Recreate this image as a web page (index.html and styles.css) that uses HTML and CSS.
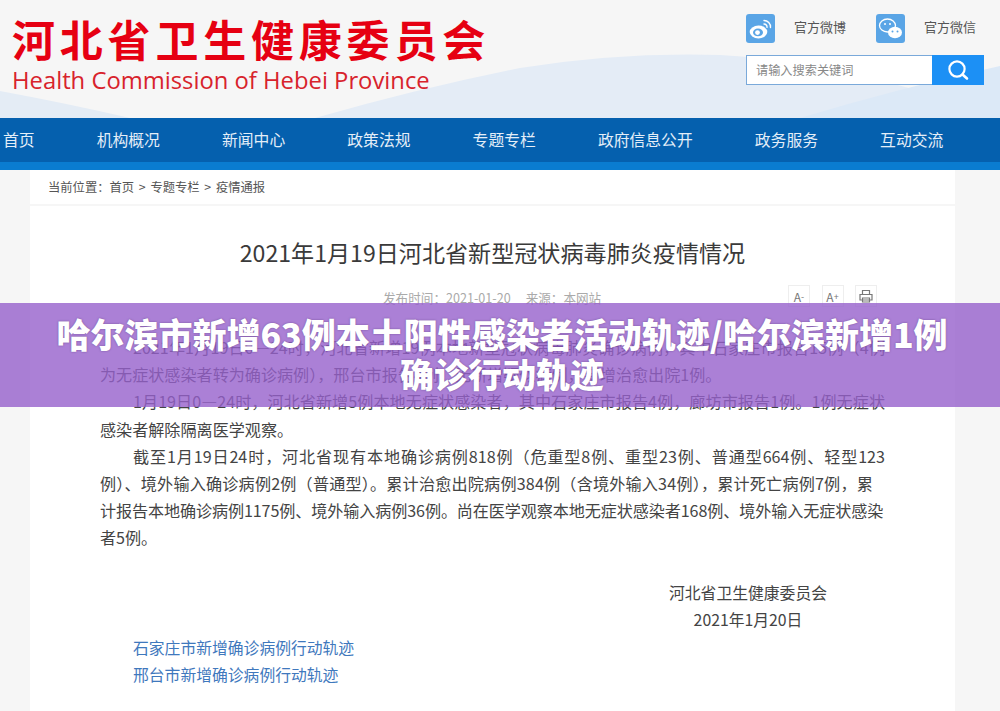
FILE: index.html
```html
<!DOCTYPE html>
<html lang="zh-CN">
<head>
  <meta charset="UTF-8" />
  <title>哈尔滨市新增63例本土阳性感染者活动轨迹</title>
  <link rel="stylesheet" href="styles.css">
</head>
<body>
  <!-- Header -->
  <header class="top">
    <svg class="top-bg" viewBox="0 0 1000 118" preserveAspectRatio="none" aria-hidden="true">
      <path d="M0 91 Q70 104 130 118 L0 118 Z" fill="#e4ecf5"/>
      <path d="M315 118 Q420 88 520 68 Q620 52 720 55 Q850 62 1000 118 Z" fill="#e4ecf6"/>
      <path d="M800 118 Q900 88 1000 66 L1000 118 Z" fill="#dce9f7"/>
    </svg>
    <div class="brand">
      <div class="brand-cn">河北省卫生健康委员会</div>
      <div class="brand-en">Health Commission of Hebei Province</div>
    </div>
    <div class="tools">
      <div class="social">
        <a class="social-item">
          <span class="social-icon">
            <svg viewBox="0 0 29 29" width="29" height="29">
              <ellipse cx="12.5" cy="18" rx="8.8" ry="6.4" fill="#fff"/>
              <ellipse cx="12" cy="18.4" rx="5" ry="3.9" fill="#5aa5e6"/>
              <circle cx="11.5" cy="18.6" r="2.4" fill="#fff"/>
              <path d="M18 6.5a6.5 6.5 0 0 1 6.5 7M18 10a3 3 0 0 1 3 3.4" fill="none" stroke="#fff" stroke-width="1.4" stroke-linecap="round"/>
            </svg>
          </span>
          <span class="social-label">官方微博</span>
        </a>
        <a class="social-item">
          <span class="social-icon">
            <svg viewBox="0 0 29 29" width="29" height="29">
              <ellipse cx="11.5" cy="11.5" rx="8" ry="6.5" fill="none" stroke="#fff" stroke-width="1.3"/>
              <circle cx="9" cy="10" r="1" fill="#fff"/>
              <circle cx="14" cy="10" r="1" fill="#fff"/>
              <ellipse cx="19" cy="18.5" rx="7" ry="5.8" fill="#fff"/>
              <circle cx="16.5" cy="17.5" r="1" fill="#5aa5e6"/>
              <circle cx="21.5" cy="17.5" r="1" fill="#5aa5e6"/>
            </svg>
          </span>
          <span class="social-label">官方微信</span>
        </a>
      </div>
      <div class="search">
        <span class="search-input">请输入搜索关键词</span>
        <span class="search-btn">
          <svg viewBox="0 0 24 24" width="24" height="24">
            <circle cx="11" cy="11" r="7.6" fill="none" stroke="#fff" stroke-width="2.2"/>
            <path d="M16.5 16.5l4.5 4" stroke="#fff" stroke-width="2.6" stroke-linecap="round"/>
          </svg>
        </span>
      </div>
    </div>
  </header>

  <!-- Nav -->
  <nav class="nav">
    <a>首页</a>
    <a>机构概况</a>
    <a>新闻中心</a>
    <a>政策法规</a>
    <a>专题专栏</a>
    <a>政府信息公开</a>
    <a>政务服务</a>
    <a>互动交流</a>
  </nav>

  <!-- Article -->
  <main class="card">
    <div class="crumbs">当前位置：首页 &gt; 专题专栏 &gt; 疫情通报</div>
    <article class="article">
      <h1 class="article-title">2021年1月19日河北省新型冠状病毒肺炎疫情情况</h1>
      <div class="meta">
        <div class="meta-info">
          <span>发布时间：2021-01-20</span>
          <span>来源：本网站</span>
        </div>
        <div class="meta-tools">
          <span class="tool-btn">A<sup>-</sup></span>
          <span class="tool-btn">A<sup>+</sup></span>
          <span class="tool-btn">
            <svg viewBox="0 0 16 16" width="16" height="16">
              <path d="M4.5 6V2.5h7V6M2 6.5h12v5.5H2zM4.5 10h7v4h-7z" fill="none" stroke="#777" stroke-width="1.2"/>
            </svg>
          </span>
        </div>
      </div>
      <div class="body">
        <p>2021年1月19日0—24时，河北省新增19例本地新型冠状病毒肺炎确诊病例，其中石家庄市报告15例（4例为无症状感染者转为确诊病例），邢台市报告4例。无新增疑似病例，新增治愈出院1例。</p>
        <p>1月19日0—24时，河北省新增5例本地无症状感染者，其中石家庄市报告4例，廊坊市报告1例。1例无症状感染者解除隔离医学观察。</p>
        <p>截至1月19日24时，河北省现有本地确诊病例818例（危重型8例、重型23例、普通型664例、轻型123<span class="wide">例）、境外输入确诊病例2例（普通型）。累计治愈出院病例384例（含境外输入34例），累计死亡病例7例，累</span><br><span class="tight">计报告本地确诊病例1175例、境外输入病例36例。尚在医学观察本地无症状感染者168例、境外输入无症状感染</span><br>者5例。</p>
      </div>
      <div class="sign">
        <div>河北省卫生健康委员会</div>
        <div>2021年1月20日</div>
      </div>
      <div class="links">
        <a>石家庄市新增确诊病例行动轨迹</a>
        <a>邢台市新增确诊病例行动轨迹</a>
      </div>
    </article>
  </main>

  <!-- Title band over the page -->
  <div class="banner">哈尔滨市新增63例本土阳性感染者活动轨迹/哈尔滨新增1例确诊行动轨迹</div>
</body>
</html>
```

FILE: styles.css
```css
html, body {
  height: 711px;
}
body {
  margin: 0;
  background: #f6f6f6;
  font-family: "Noto Sans CJK SC", "Noto Sans", sans-serif;
  color: #444;
  overflow: hidden;
  position: relative;
}

/* --- Header --- */
.top {
  height: 118px;
  padding: 0 16px 0 12px;
  display: flex;
  justify-content: space-between;
  position: relative;
}
.top-bg {
  position: absolute;
  inset: 0;
  width: 100%;
  height: 100%;
}
.brand, .tools { position: relative; }
.brand-cn {
  margin-top: 11px;
  font-size: 43px;
  line-height: 54px;
  font-weight: 700;
  letter-spacing: 4.8px;
  color: #e60012;
}
.brand-en {
  font-family: "Open Sans", sans-serif;
  font-size: 23.8px;
  line-height: 30px;
  color: #d8232c;
}
.tools {
  width: 238px;
  padding-top: 14px;
}
.social {
  display: flex;
  gap: 48px;
}
.social-item {
  width: 82px;
  display: flex;
  align-items: center;
  gap: 19px;
  font-size: 13px;
  white-space: nowrap;
  color: #555;
}
.social-label {
  margin-bottom: 4px;
}
.social-icon {
  flex: none;
  width: 29px;
  height: 29px;
  border-radius: 3px;
  background: #5aa5e6;
}
.search {
  margin-top: 12px;
  height: 30px;
  display: flex;
}
.search-input {
  flex: 1;
  padding-left: 9px;
  border: 1px solid #7aa9da;
  border-right: none;
  background: #fff;
  font-size: 12.2px;
  line-height: 28px;
  color: #888;
}
.search-btn {
  width: 52px;
  background: #1c90f5;
  display: flex;
  align-items: center;
  justify-content: center;
}

/* --- Nav --- */
.nav {
  height: 43px;
  padding: 0 0 1px 3px;
  display: flex;
  align-items: center;
  gap: 62.1px;
  background: #0560ae;
  border-bottom: 8px solid #0a7cd0;
  font-size: 15.8px;
  color: #e4eef8;
  white-space: nowrap;
}

/* --- Article --- */
.card {
  width: 925px;
  margin-left: 30px;
  height: 541px;
  background: #fff;
  overflow: hidden;
}
.crumbs {
  height: 34px;
  padding-left: 18px;
  border-bottom: 2px solid #f6f6f6;
  font-size: 12.3px;
  word-spacing: 2px;
  line-height: 35px;
  color: #555;
}
.article {
  padding: 0 70px;
}
.article-title {
  margin: 28px 0 0;
  font-size: 23.1px;
  line-height: 36px;
  font-weight: 400;
  text-align: center;
  color: #3a3a3a;
}
.meta {
  margin-top: 14px;
  height: 50px;
  display: flex;
  justify-content: space-between;
  font-size: 12.6px;
  color: #aaa;
}
.meta-info {
  margin-left: 283px;
  display: flex;
  gap: 15px;
  line-height: 28px;
}
.meta-tools {
  margin: 1px 8px 0 0;
  display: flex;
  gap: 11.5px;
}
.tool-btn {
  width: 20px;
  height: 20px;
  border: 1px solid #eee;
  display: flex;
  align-items: center;
  justify-content: center;
  font-size: 12px;
  color: #777;
}
.tool-btn sup {
  font-size: 9px;
  line-height: 1;
}
.body {
  font-size: 16.1px;
  line-height: 27.2px;
  color: #444;
}
.body p {
  margin: 0;
  text-indent: 33px;
  text-align: justify;
}
/* the reference's font sets digits a little differently, so these lines are fitted by hand */
.wide { letter-spacing: 0.2px; }
.tight { letter-spacing: -0.1px; }
.sign {
  margin: 27px 0 0 518px;
  width: 260px;
  text-align: center;
  font-size: 15.8px;
  line-height: 27.2px;
}
.links {
  margin: 1px 0 0 33px;
  display: flex;
  flex-direction: column;
  font-size: 15.8px;
  line-height: 27.2px;
  color: #3f78bd;
}

/* --- Title band --- */
.banner {
  position: absolute;
  left: 0;
  right: 0;
  top: 303px;
  height: 104px;
  box-sizing: border-box;
  padding: 11px 48px 11px 52px;
  background: rgba(150, 96, 204, 0.8);
  font-size: 34px;
  line-height: 40px;
  font-weight: 900;
  text-align: center;
  color: #fff;
  text-shadow: 0 0 2px rgba(60, 30, 90, 0.5);
}
```
